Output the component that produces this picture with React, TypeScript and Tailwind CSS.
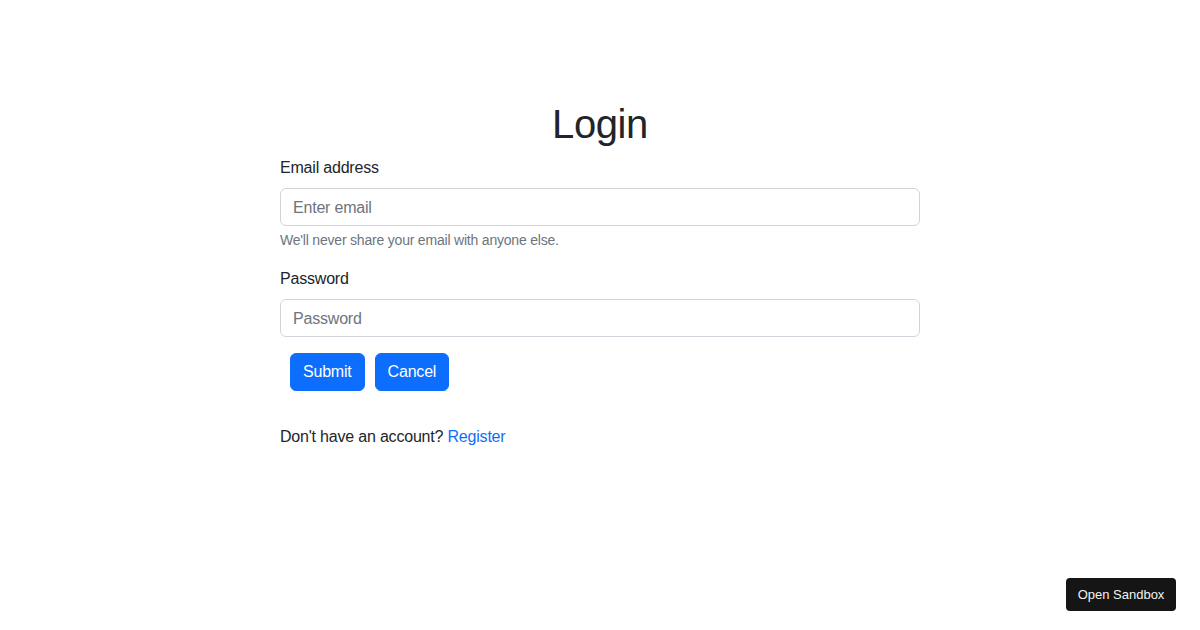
import { useState } from "react";

const Login = () => {
  const [email, setEmail] = useState("");
  const [password, setPassword] = useState("");

  return (
    <div className="mx-auto w-[640px] pt-[100px]">
      <h1 className="mb-2 text-center text-[40px] leading-[48px] font-normal tracking-[-0.4px] text-[#212529]">Login</h1>
      <form onSubmit={(e) => e.preventDefault()}>
        <div className="mb-4">
          <label className="mb-2 block text-base leading-6 text-[#212529]">Email address</label>
          <input
            type="email"
            placeholder="Enter email"
            value={email}
            onChange={(e) => setEmail(e.target.value)}
            className="block w-full rounded-[6px] border border-[#ced4da] bg-white px-3 pt-[7px] pb-[5px] text-base leading-6 text-[#212529] outline-none placeholder:text-[#6c757d]"
          />
          <div className="mt-1 text-sm leading-[21px] text-[#6c757d]">We'll never share your email with anyone else.</div>
        </div>
        <div className="mb-4">
          <label className="mb-2 block text-base leading-6 text-[#212529]">Password</label>
          <input
            type="password"
            placeholder="Password"
            value={password}
            onChange={(e) => setPassword(e.target.value)}
            className="block w-full rounded-[6px] border border-[#ced4da] bg-white px-3 pt-[7px] pb-[5px] text-base leading-6 text-[#212529] outline-none placeholder:text-[#6c757d]"
          />
        </div>
        <div className="flex gap-[10px] pl-[10px]">
          <button type="submit" className="rounded-[6px] border border-[#0d6efd] bg-[#0d6efd] px-3 py-[6px] text-base leading-6 text-white">
            Submit
          </button>
          <button type="button" className="rounded-[6px] border border-[#0d6efd] bg-[#0d6efd] px-3 py-[6px] text-base leading-6 text-white">
            Cancel
          </button>
        </div>
      </form>
      <p className="mt-[34px] text-base leading-6 text-[#212529]">
        Don't have an account? <a href="#" className="text-[#0d6efd]">Register</a>
      </p>
    </div>
  );
};

export default function App() {
  return (
    <div className="relative h-[630px] w-full bg-white font-['Liberation_Sans',Arial,sans-serif] tracking-[-0.2px]">
      <Login />
      <button className="absolute right-[24px] bottom-[19px] h-[33px] w-[110px] rounded-[4px] bg-[#151515] text-[13px] tracking-normal text-[#f2f2f2]">
        Open Sandbox
      </button>
    </div>
  );
}
